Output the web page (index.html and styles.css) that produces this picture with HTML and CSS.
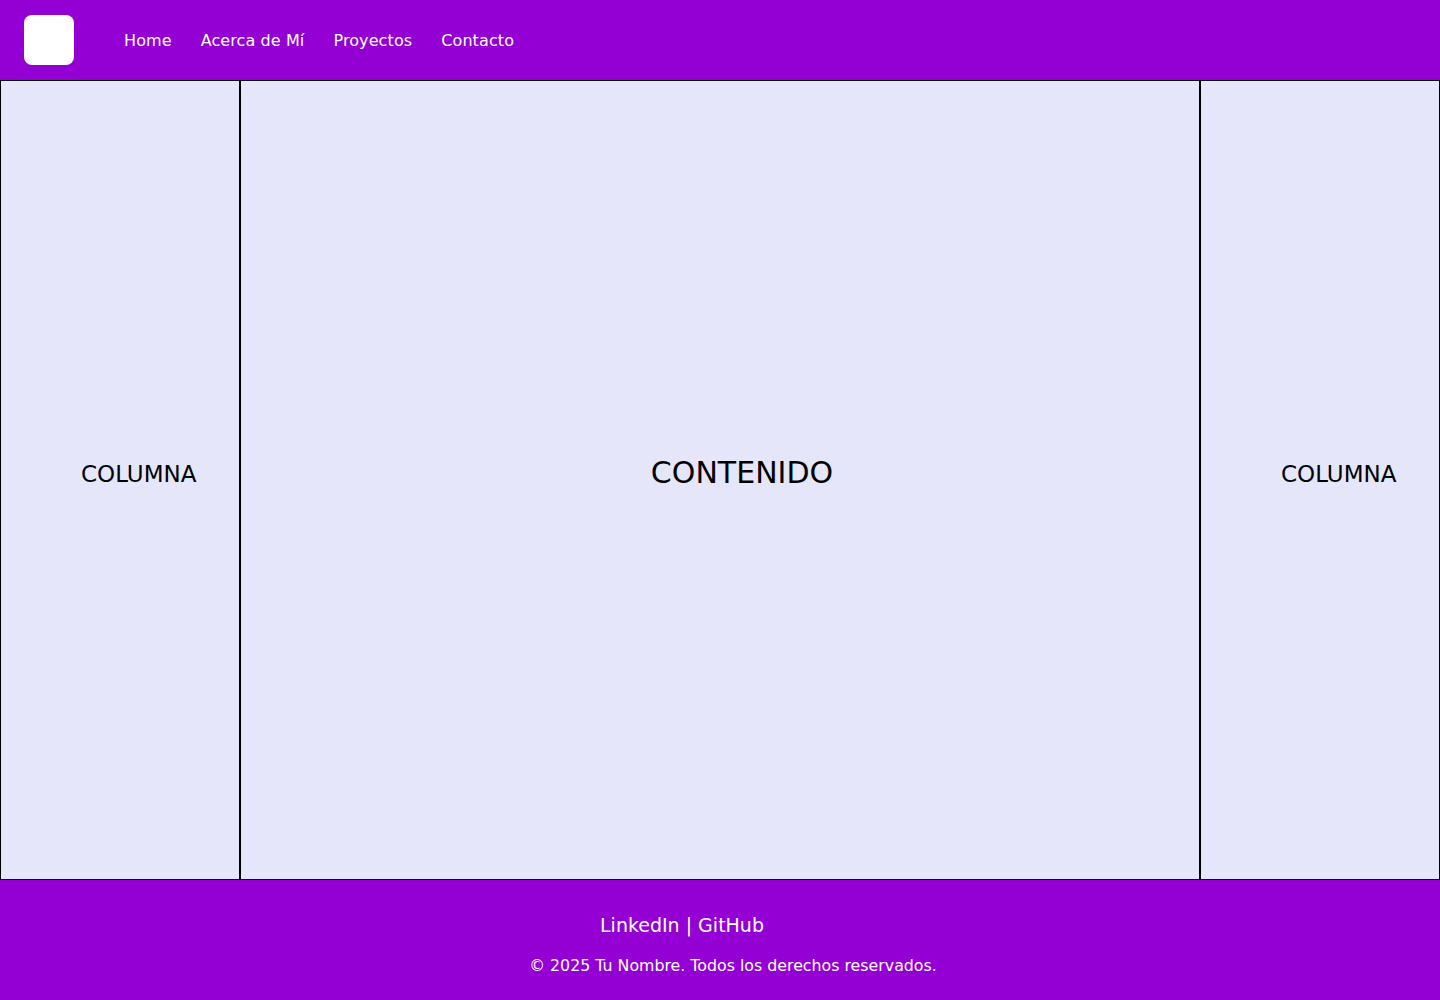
FILE: index.html
```html
<!DOCTYPE html>
<html lang="es">
<head>
<meta charset="utf-8">
<title>Portafolio</title>
<link rel="stylesheet" href="styles.css">
</head>
<body>
<header class="header">
  <div class="logo"></div>
  <nav class="nav">
    <a href="#">Home</a>
    <a href="#">Acerca de Mí</a>
    <a href="#">Proyectos</a>
    <a href="#">Contacto</a>
  </nav>
</header>
<main class="main">
  <aside class="col side">COLUMNA</aside>
  <section class="col content">CONTENIDO</section>
  <aside class="col side">COLUMNA</aside>
</main>
<footer class="footer">
  <p class="links">LinkedIn | GitHub</p>
  <p class="copy">© 2025 Tu Nombre. Todos los derechos reservados.</p>
</footer>
</body>
</html>
```

FILE: styles.css
```css
* { box-sizing: border-box; }
html, body { margin: 0; padding: 0; }
body {
  font-family: "DejaVu Sans", "Liberation Sans", sans-serif;
  background: #e6e6fa;
  color: #000;
}
.header {
  height: 80px;
  background: #9400d3;
  display: flex;
  align-items: center;
  padding: 0 24px;
}
.logo {
  width: 50px;
  height: 50px;
  background: #fff;
  border-radius: 8px;
  margin-right: 50px;
}
.nav {
  display: flex;
  gap: 29px;
}
.nav a {
  color: #fff;
  text-decoration: none;
  font-size: 16px;
  letter-spacing: 0.1px;
}
.main {
  display: flex;
  height: 800px;
}
.col {
  border: 1px solid #000;
  background: #e6e6fa;
  display: flex;
  align-items: center;
}
.side {
  width: 240px;
  padding-left: 80px;
  font-size: 23px;
  padding-bottom: 12px;
}
.content {
  width: 960px;
  justify-content: center;
  font-size: 30px;
  padding-left: 44px;
  padding-bottom: 16px;
}
.footer {
  height: 120px;
  background: #9400d3;
  color: #fff;
  text-align: center;
  padding-top: 33px;
}
.footer p { margin: 0; }
.links {
  font-size: 19px;
  padding-right: 76px;
  line-height: 24px;
}
.copy {
  font-size: 15.8px;
  padding-left: 26px;
  margin-top: 19px !important;
  line-height: 20px;
}
```
